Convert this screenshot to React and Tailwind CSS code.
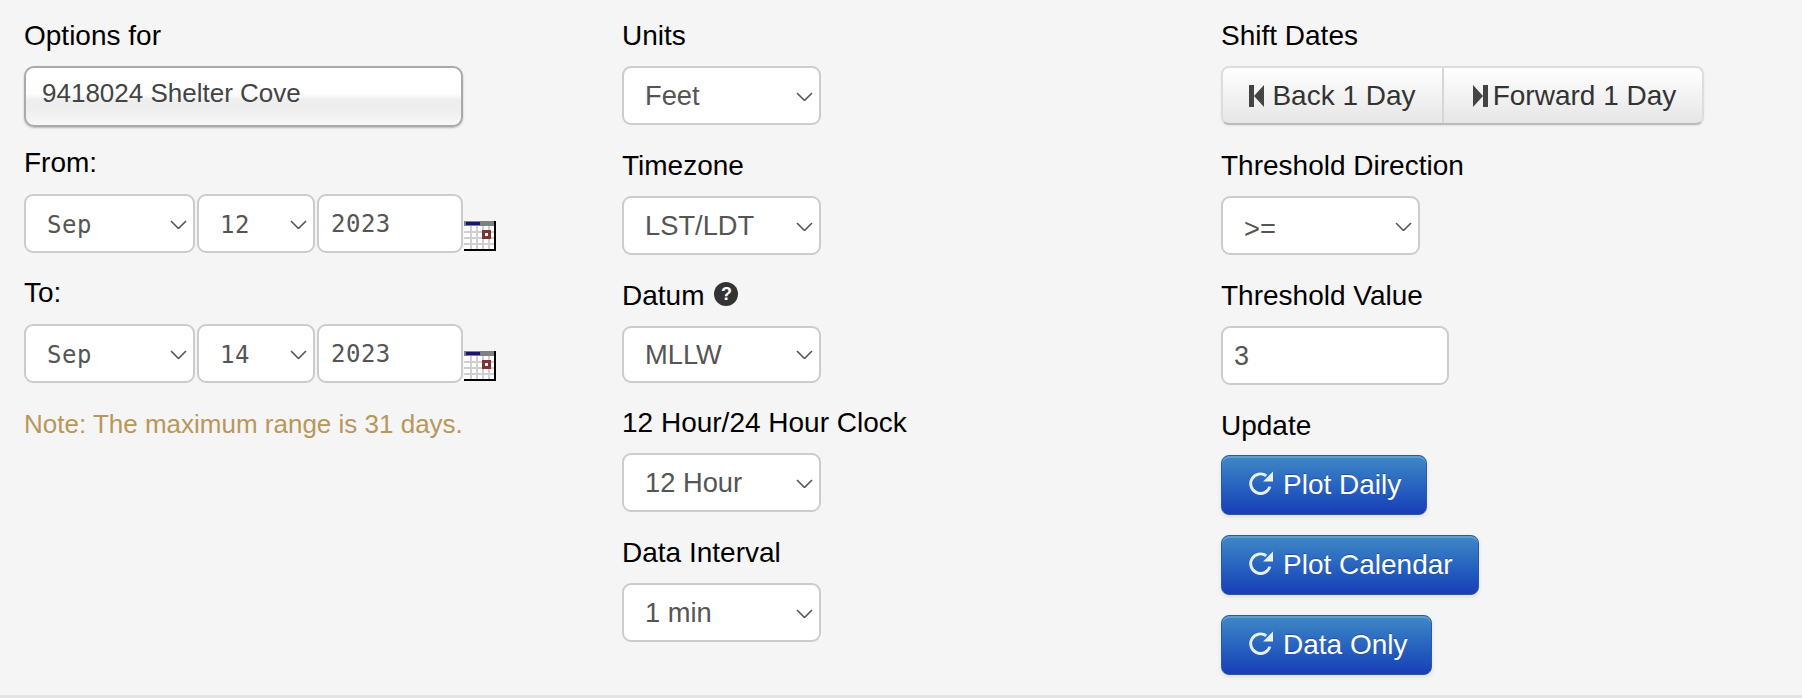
import { useState } from 'react'

const font = "font-['Liberation_Sans',Arial,sans-serif]"

function Label({ children, className = 'mb-[10px]' }) {
  return <label className={`flex items-center h-10 text-[28px] leading-10 text-black ${className}`}>{children}</label>
}

function Chevron({ className }) {
  return (
    <svg viewBox="0 0 17 9" className={`absolute w-[17px] h-[9px] pointer-events-none ${className}`} fill="none" stroke="#555" strokeWidth="1.6">
      <path d="M1 1l7.5 7.5L16 1" />
    </svg>
  )
}

function Select({ value, options, width, height = 'h-[59px]', mono, pad = 'pl-[21px]', chevron = 'right-[8px] top-[26px]', textClass = 'pt-[2px]' }) {
  const [val, setVal] = useState(value)
  return (
    <div className={`relative shrink-0 ${width} ${height}`}>
      <select
        value={val}
        onChange={(e) => setVal(e.target.value)}
        className={`appearance-none w-full h-full ${pad} bg-white border-2 border-[#ccc] rounded-[9px] text-[#555] outline-none ${mono ? "font-['DejaVu_Sans_Mono',monospace] text-[24px] tracking-[0.5px]" : 'text-[27.3px]'} ${textClass}`}
      >
        {options.map((o) => <option key={o}>{o}</option>)}
      </select>
      <Chevron className={chevron} />
    </div>
  )
}

function CalendarIcon() {
  // the little pixel calendar next to the date fields
  return (
    <svg viewBox="0 0 32 30" className="w-8 h-[30px] shrink-0 self-end mb-[2px] -ml-[1px]" shapeRendering="crispEdges">
      <rect width="32" height="30" fill="#000" />
      <rect width="30" height="28" fill="#fff" />
      <rect width="30" height="5" fill="#808080" />
      <rect x="2" y="1" width="14" height="3" fill="#16166e" />
      {[6, 12, 18, 24].map((x) => <rect key={x} x={x} y="5" width="2" height="23" fill="#d0d0d0" />)}
      {[10, 16, 22].map((y) => <rect key={y} x="0" y={y} width="30" height="2" fill="#d0d0d0" />)}
      <rect x="18" y="9" width="9" height="9" fill="#7b3333" />
      <rect x="21" y="12" width="3" height="3" fill="#fff" />
    </svg>
  )
}

function DateRow({ day, className }) {
  return (
    <div className={`flex gap-[2px] ${className}`}>
      <Select value="Sep" options={['Aug', 'Sep', 'Oct']} width="w-[171px]" mono />
      <Select value={day} options={['12', '13', '14']} width="w-[118px]" mono />
      <input
        defaultValue="2023"
        className="w-[146px] h-[59px] pl-[12px] bg-white border-2 border-[#ccc] rounded-[9px] text-[#555] outline-none font-['DejaVu_Sans_Mono',monospace] text-[24px] tracking-[0.5px]"
      />
      <CalendarIcon />
    </div>
  )
}

function RefreshIcon() {
  return (
    <svg viewBox="0 0 24 24" className="w-[25px] h-[25px] shrink-0 opacity-90 mb-[4px]">
      <path d="M21 15A9.4 9.4 0 1 1 17.6 4.6" fill="none" stroke="#fff" strokeWidth="2.8" />
      <path d="M24 0.5v9.5h-9.5z" fill="#fff" />
    </svg>
  )
}

function BlueButton({ label, width }) {
  return (
    <button className={`flex items-center h-[60px] ${width} pl-[26px] gap-[10px] rounded-[8px] border border-[#2a5a9e] bg-gradient-to-b from-[#4088c6] to-[#1a3cb8] text-white text-[28px] [text-shadow:0_-1px_0_rgba(0,0,0,0.25)] shadow-[inset_0_2px_0_rgba(255,255,255,0.18),0_2px_4px_rgba(0,0,0,0.1)]`}>
      <RefreshIcon />
      {label}
    </button>
  )
}

function StepButton({ dir, label, className, gap }) {
  return (
    <button className={`flex items-center justify-center h-full text-[28px] text-[#333] ${gap} ${className}`}>
      <svg viewBox="0 0 15 22" className="w-[15px] h-[22px] shrink-0" fill="#444">
        {dir === 'back'
          ? <path d="M0 0h5v22H0zM5 11L15 0v22z" />
          : <path d="M15 0h-5v22h5zM10 11L0 0v22z" />}
      </svg>
      {label}
    </button>
  )
}

export default function App() {
  return (
    <div className={`h-[698px] bg-[#f5f5f5] border-b-[3px] border-[#e3e3e3] overflow-hidden pl-6 pt-4 grid grid-cols-[598px_599px_1fr] ${font}`}>

      {/* Station + date range */}
      <div>
        <Label>Options for</Label>
        <div className="flex items-center w-[439px] h-[61px] pl-[16px] pb-[7px] mb-4 rounded-[10px] border-2 border-[#aaa] text-[26px] text-[#444] bg-[linear-gradient(#fff_0%,#fff_45%,#eee_56%,#eee_72%,#f8f8f8_100%)] shadow-[0_1px_2px_rgba(0,0,0,0.25)]">
          9418024 Shelter Cove
        </div>
        <Label className="mb-[11px]">From:</Label>
        <DateRow day="12" className="mb-5" />
        <Label className="mb-[11px]">To:</Label>
        <DateRow day="14" className="mb-[21px]" />
        <p className="h-10 leading-10 text-[26px] text-[#b8975a]">Note: The maximum range is 31 days.</p>
      </div>

      {/* Units etc */}
      <div>
        <Label>Units</Label>
        <div className="mb-[21px]"><Select value="Feet" options={['Feet', 'Meters']} width="w-[199px]" /></div>
        <Label>Timezone</Label>
        <div className="mb-[21px]"><Select value="LST/LDT" options={['GMT', 'LST', 'LST/LDT']} width="w-[199px]" /></div>
        <Label>
          Datum
          <span className="ml-[10px] mb-[4px] flex items-center justify-center w-6 h-6 rounded-full bg-[#333] text-white text-[18px] font-bold leading-none">?</span>
        </Label>
        <div className="mb-5"><Select value="MLLW" options={['MHHW', 'MLLW', 'NAVD']} width="w-[199px]" height="h-[57px]" chevron="right-[8px] top-[24px]" /></div>
        <Label>12 Hour/24 Hour Clock</Label>
        <div className="mb-[21px]"><Select value="12 Hour" options={['12 Hour', '24 Hour']} width="w-[199px]" /></div>
        <Label>Data Interval</Label>
        <Select value="1 min" options={['1 min', '6 min', '1 hour']} width="w-[199px]" />
      </div>

      {/* Shift + threshold + update */}
      <div>
        <Label>Shift Dates</Label>
        <div className="flex w-[483px] h-[59px] mb-[21px] rounded-[8px] border-2 border-[#ddd] border-b-[#bbb] bg-gradient-to-b from-white to-[#e6e6e6] shadow-[0_1px_2px_rgba(0,0,0,0.08)]">
          <StepButton dir="back" label="Back 1 Day" gap="gap-[8px]" className="w-[221px] border-r-2 border-[#d6d6d6]" />
          <StepButton dir="forward" label="Forward 1 Day" gap="gap-[5px]" className="flex-1 pl-[3px]" />
        </div>
        <Label>Threshold Direction</Label>
        <div className="mb-[21px]">
          <Select value=">=" options={['>=', '<=']} width="w-[199px]" textClass="pt-[8px]" />
        </div>
        <Label>Threshold Value</Label>
        <input
          defaultValue="3"
          className="block w-[228px] h-[59px] mb-[21px] pl-[11px] pt-[2px] bg-white border-2 border-[#ccc] rounded-[9px] text-[#555] text-[27px] outline-none"
        />
        <Label className="mb-[9px]">Update</Label>
        <div className="flex flex-col gap-5 items-start">
          <BlueButton label="Plot Daily" width="w-[206px]" />
          <BlueButton label="Plot Calendar" width="w-[258px]" />
          <BlueButton label="Data Only" width="w-[211px]" />
        </div>
      </div>
    </div>
  )
}
